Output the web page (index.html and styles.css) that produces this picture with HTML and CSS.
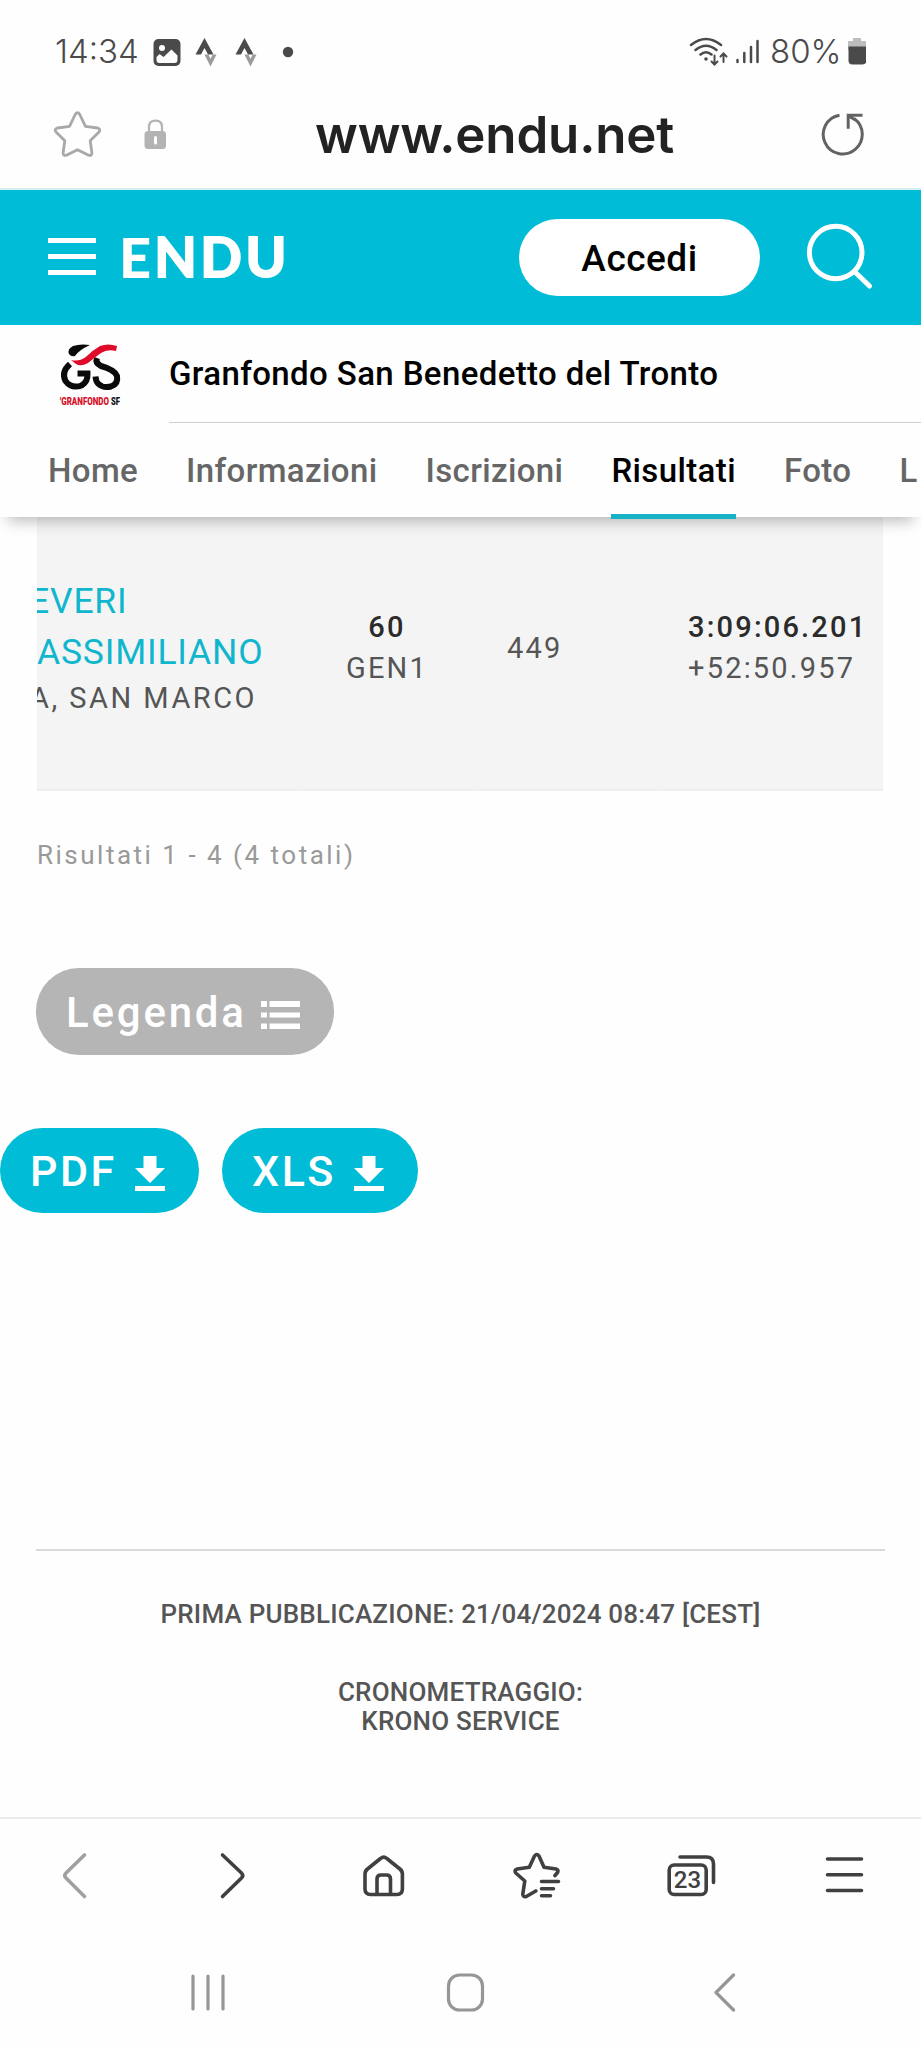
FILE: index.html
```
<!DOCTYPE html>
<html lang="it">

<head>
    <meta charset="UTF-8">
    <meta name="viewport" content="width=device-width, initial-scale=1.0">
    <title>Granfondo San Benedetto del Tronto - Risultati</title>
    <link rel="stylesheet" href="styles.css">
</head>

<body>
    <div class="status-bar">
        <span class="time">14:34</span>
        <svg class="status-icons" width="142" height="32" viewBox="152 37 142 32">
            <rect x="153.5" y="39" width="27" height="27" rx="5" fill="#4a4a4a"/>
            <circle cx="162" cy="48" r="3" fill="#fefefe"/>
            <path d="M156.500 57l3-3 4 3 8-7.500 6 6v4.500q0 3-3 3h-15q-3 0-3-3z" fill="#fefefe"/>
            <g id="strava">
                <path d="M204.500 38l9 16.500h-5.500l-3.500-6.500-3.500 6.500h-5.500z" fill="#4a4a4a"/>
                <path d="M204.500 54.500h4l2 4.500 2-4.500h4l-6 12z" fill="#9b9b9b"/>
            </g>
            <use href="#strava" x="40"/>
            <circle cx="288" cy="52" r="5.200" fill="#4a4a4a"/>
        </svg>
        <svg class="signal" width="72" height="30" viewBox="688 36 72 30" fill="none" stroke="#4a4a4a" stroke-width="2.500" stroke-linecap="round">
            <path d="M691 45q15-12 30 0M695.500 50q10.500-8.500 21 0M700.500 54.500q5.500-4.500 11 0"/>
            <circle cx="706" cy="59" r="1.800" fill="#4a4a4a" stroke="none"/>
            <path d="M714.500 55.500v8M711.500 61.500l3 3 3-3M723.500 62v-8M720.500 56.500l3-3 3 3" stroke-width="2"/>
            <path d="M737.500 60v2M744.300 53v9M751 47v15M757.500 41v21"/>
        </svg>
        <span class="percent">80%</span>
        <svg width="18" height="28" viewBox="848 37 18 28">
            <path d="M853 38h8v3h5v9h-18v-9h5z" fill="#bdbdbd"/>
            <path d="M848.500 46.500h18v14q0 4-4 4h-10q-4 0-4-4z" fill="#4a4a4a"/>
        </svg>
    </div>

    <div class="url-bar">
        <svg class="star" width="48" height="48" viewBox="53 109 48 48" fill="none" stroke="#a8a8a8" stroke-width="2.800" stroke-linejoin="round">
            <path d="M75.200 113.500q2.300-3.500 4.600 0l5.700 11.800 12.200 1.700q3.300 1 1.300 4l-8.800 8.700 1.700 12q0 3.500-3.300 2.500l-11.100-5.400-11.100 5.400q-3.300 1-3.300-2.500l1.700-12-8.800-8.700q-2-3 1.300-4l12.200-1.700z"/>
        </svg>
        <svg class="lock" width="23" height="31" viewBox="144 118 23 31">
            <path d="M149 131v-5q0-6.300 6.500-6.300t6.500 6.300v5" fill="none" stroke="#b3b3b3" stroke-width="2.200"/>
            <rect x="144.500" y="130" width="21.500" height="18" rx="3.500" fill="#b3b3b3"/>
            <path d="M155.500 136.500v5.500" stroke="#fefefe" stroke-width="3" stroke-linecap="round"/>
        </svg>
        <span class="address">www.endu.net</span>
        <svg class="reload" width="44" height="44" viewBox="821 111 44 44" fill="none" stroke="#636363" stroke-width="3">
            <path d="M840.500 114.200a19.500 19.500 0 1 0 14.500 3.300"/>
            <path d="M863.500 114.200h-14.300v13.500M849.500 115l7 4"/>
        </svg>
    </div>

    <header>
        <div class="hamburger"><i></i><i></i><i></i></div>
        <div class="brand"><b>E</b>NDU</div>
        <button class="btn-login">Accedi</button>
        <svg width="68" height="68" viewBox="806 222 68 68" fill="none" stroke="#fff" stroke-width="5" stroke-linecap="round">
            <circle cx="836.700" cy="252.500" r="26.300"/>
            <path d="M856.500 272.500l14 13.500"/>
        </svg>
    </header>

    <div class="event">
        <svg class="event-logo" width="64" height="64" viewBox="58 343 64 64">
            <path d="M70 365q-9 8-4.500 17 6 8 16 4.500 6.500-3.500 6-12h-10" fill="none" stroke="#0a0a0a" stroke-width="6"/>
            <path d="M97 359q-2 5 4 8 14 4 16 10 1.500 8-6 10.500-8 2-13-3-2-2-2.500-7" fill="none" stroke="#0a0a0a" stroke-width="6"/>
            <path d="M90 346q-10-1.500-17 1-6 3-4 8 2 3 6 2 4-6 15-11z" fill="#0a0a0a"/>
            <path d="M71 361q9 2 16-4 6-6 13-10 8-3 17 0l-1 5q-9-2-15 2-7 5-13 10-7 4-12 1z" fill="#e00b28"/>
            <text x="60" y="405.500" textLength="49" lengthAdjust="spacingAndGlyphs" class="logo-text">'GRANFONDO</text>
            <text x="111" y="405.500" textLength="9" lengthAdjust="spacingAndGlyphs" class="logo-text dark">SF</text>
        </svg>
        <h1>Granfondo San Benedetto del Tronto</h1>
    </div>

    <nav>
        <a href="#">Home</a>
        <a href="#">Informazioni</a>
        <a href="#">Iscrizioni</a>
        <a href="#" class="active">Risultati</a>
        <a href="#">Foto</a>
        <a href="#">L</a>
    </nav>

    <main>
        <div class="result-row">
            <div class="cell athlete">
                <div class="name"><span class="cut">EVERI</span></div>
                <div class="name">ASSIMILIANO</div>
                <div class="team">A, SAN MARCO</div>
            </div>
            <div class="cell category">
                <strong>60</strong>
                <span>GEN1</span>
            </div>
            <div class="cell bib"><span>449</span></div>
            <div class="cell result">
                <strong>3:09:06.201</strong>
                <span>+52:50.957</span>
            </div>
        </div>

        <p class="count">Risultati 1 - 4 (4 totali)</p>

        <button class="btn btn-legend">Legenda
            <svg width="39" height="28" viewBox="0 0 39 28" fill="#fff">
                <path d="M0 0h6v6H0zM8.500 0H39v6H8.500zM0 11.500h6v5H0zM8.500 11.500H39v5H8.500zM0 22.500h6v6H0zM8.500 22.500H39v6H8.500z"/>
            </svg>
        </button>

        <div class="downloads">
            <button class="btn btn-pdf">PDF
                <svg width="30" height="35" viewBox="0 0 30 35" fill="#fff">
                    <path d="M8.500 0h13v12H30L15 27 0 12h8.500zM0 30h30v5H0z"/>
                </svg>
            </button>
            <button class="btn btn-xls">XLS
                <svg width="30" height="35" viewBox="0 0 30 35" fill="#fff">
                    <path d="M8.500 0h13v12H30L15 27 0 12h8.500zM0 30h30v5H0z"/>
                </svg>
            </button>
        </div>

        <div class="info">
            <p class="published">PRIMA PUBBLICAZIONE: 21/04/2024 08:47 [CEST]</p>
            <p class="timing">CRONOMETRAGGIO:<br><span>KRONO SERVICE</span></p>
        </div>
    </main>

    <div class="toolbar">
        <svg width="48" height="48" viewBox="50 1852 48 48"><path d="M84.500 1855l-18.500 18q-2.500 2.500 0 5l18.500 18.500"/></svg>
        <svg width="48" height="48" viewBox="209 1852 48 48"><path d="M222.500 1855l19 18q2.500 2.500 0 5l-19 18.500"/></svg>
        <svg width="48" height="48" viewBox="360 1852 48 48">
            <path d="M365 1874q0-3 2.500-5l13-10.500q3.200-2.800 6.400 0l13 10.500q2.500 2 2.500 5v15q0 5.500-5.500 5.500h-26.400q-5.500 0-5.500-5.500z"/>
            <path d="M377 1894v-15q0-4 4-4h5.500q4 0 4 4v15"/>
        </svg>
        <svg width="48" height="48" viewBox="513 1852 48 48">
            <path d="M555 1875.500l2.500-3q1.500-2.500-1.500-3.500l-12-1.800-5-11.200q-2.200-3-4.500 0l-5.200 11.200-12 1.800q-3.500 1-1.500 4l9 8-2 13q0 3.500 3.500 2.500l9.500-5.500"/>
            <path d="M541.500 1881.500h17M541.500 1888.700h12M541.500 1895.700h9"/>
        </svg>
        <svg width="50" height="48" viewBox="667 1852 50 48">
            <rect x="669.200" y="1865" width="37" height="29.500" rx="5"/>
            <path d="M680 1857h26.500q7 0 7 7v18.500"/>
            <text x="687.500" y="1888" text-anchor="middle" class="tab-count">23</text>
        </svg>
        <svg width="48" height="48" viewBox="820 1852 48 48"><path d="M827.500 1859h34M827.500 1874.700h34M827.500 1890.500h34"/></svg>
    </div>

    <div class="system-nav">
        <svg width="40" height="40" viewBox="188 1972 40 40"><path d="M193 1976v33M208 1976v33M223 1976v33"/></svg>
        <svg width="40" height="40" viewBox="446 1972 40 40"><rect x="448.500" y="1975" width="34" height="35" rx="11"/></svg>
        <svg width="40" height="40" viewBox="704 1972 40 40"><path d="M733.500 1975l-17.500 17.500 17.500 17.500"/></svg>
    </div>
</body>

</html>
```
FILE: styles.css
```
* {
    box-sizing: border-box;
}

body {
    background-color: #FEFEFE;
    color: #555;
    font-family: Roboto, Arial, sans-serif;
    margin: 0;
    height: 2048px;
    display: flex;
    flex-direction: column;
    overflow: hidden;
}

svg {
    display: block;
    flex: none;
}

button {
    border: none;
    font-family: inherit;
    cursor: pointer;
}

.status-bar {
    display: flex;
    align-items: center;
    height: 102px;
    padding: 0 55px 0 55px;
    font-family: Inter, sans-serif;
    font-size: 33px;
    font-weight: 350;
    color: #4A4A4A;
}

.time {
    width: 97px;
}

.status-icons {
    margin-top: 4px;
}

.signal {
    margin-left: auto;
}

.percent {
    width: 88px;
    padding-left: 10px;
    white-space: nowrap;
}

.url-bar {
    display: flex;
    align-items: center;
    height: 88px;
    padding: 0 57px 22px 53px;
    border-bottom: 2px solid #D5EFF2;
}

.lock {
    margin-left: 43px;
}

.address {
    margin-left: 148px;
    font-family: Inter, sans-serif;
    font-size: 51px;
    font-weight: 600;
    letter-spacing: -0.15px;
    color: #222;
}

.reload {
    margin-left: auto;
}

header {
    display: flex;
    align-items: center;
    height: 135px;
    padding: 0 48px 3px 48px;
    background-color: #00BCD6;
}

.hamburger {
    display: flex;
    flex-direction: column;
    gap: 11px;
    width: 48px;
}

.hamburger i {
    height: 5px;
    background-color: #FFF;
}

.brand {
    margin-left: 23px;
    font-family: Lato, sans-serif;
    font-size: 56px;
    font-weight: 800;
    letter-spacing: 2.6px;
    color: #FFF;
}

.brand b {
    font-weight: 900;
}

.btn-login {
    width: 241px;
    height: 77px;
    margin-top: 3px;
    margin-left: auto;
    margin-right: 45px;
    padding: 2px 0 0;
    border-radius: 39px;
    background-color: #FFF;
    color: #000;
    font-size: 37px;
    font-weight: 500;
    letter-spacing: 0.5px;
}

.event {
    display: flex;
    align-items: center;
    height: 98px;
    padding-left: 58px;
}

.event-logo {
    overflow: visible;
}

.logo-text {
    font-family: Roboto, sans-serif;
    font-size: 11px;
    font-weight: 900;
    fill: #D8102A;
}

.logo-text.dark {
    fill: #111;
}

.event h1 {
    flex: 1;
    margin: 0 0 0 47px;
    border-bottom: 1px solid #CFCFCF;
    line-height: 97px;
    font-size: 33px;
    font-weight: 500;
    letter-spacing: 0.38px;
    color: #000;
    white-space: nowrap;
}

nav {
    position: relative;
    display: flex;
    gap: 48px;
    height: 94px;
    padding-left: 48px;
    background-color: #FEFEFE;
    box-shadow: 0 12px 14px -8px rgba(0, 0, 0, 0.27);
}

nav a {
    height: 96px;
    line-height: 96px;
    color: #666;
    text-decoration: none;
    font-size: 33px;
    font-weight: 500;
    letter-spacing: 0.38px;
}

nav a.active {
    color: #000;
    border-bottom: 5px solid #18B2C6;
}

.result-row {
    display: flex;
    width: 846px;
    height: 274px;
    margin-left: 37px;
    overflow: hidden;
    background-color: #F4F4F4;
}

.cell {
    display: flex;
    flex-direction: column;
    justify-content: center;
    padding-bottom: 10px;
    border-bottom: 2px solid #EEE;
    border-right: 3px solid #F4F4F4;
    line-height: 41px;
    font-size: 29px;
    font-weight: 450;
    letter-spacing: 2.2px;
    white-space: nowrap;
}

.cell strong {
    font-weight: 500;
    color: #2B2B2B;
}

.athlete {
    width: 263px;
    padding-bottom: 12px;
}

.name {
    line-height: 51px;
    font-size: 35.5px;
    letter-spacing: 0.8px;
    color: #10B6CD;
}

.cut {
    margin-left: -8px;
}

.team {
    margin-left: -7px;
    letter-spacing: 2.5px;
}

.category {
    width: 177px;
    align-items: center;
}

.bib {
    width: 184px;
    padding-left: 30px;
}

.result {
    flex: 1;
    padding-left: 27px;
    border-right: none;
}

.count {
    margin: 49px 0 0 37px;
    line-height: 30px;
    font-size: 26px;
    letter-spacing: 2.5px;
    color: #999;
}

.btn {
    display: flex;
    align-items: center;
    height: 85px;
    padding: 1px 34px 0 30px;
    border-radius: 43px;
    background-color: #00BCD6;
    color: #FFF;
    font-size: 43px;
    font-weight: 550;
    letter-spacing: 2.5px;
}

.btn svg {
    margin-left: auto;
    margin-top: 5px;
}

.btn-legend {
    width: 298px;
    height: 87px;
    margin: 98px 0 0 36px;
    background-color: #B5B5B5;
    font-size: 42px;
    letter-spacing: 2.8px;
}

.downloads {
    display: flex;
    gap: 23px;
    margin-top: 73px;
}

.btn-pdf {
    width: 199px;
}

.btn-xls {
    width: 196px;
}

.info {
    margin: 336px 36px 0;
    padding-top: 49px;
    border-top: 2px solid #DADADA;
    text-align: center;
    font-size: 26px;
    font-weight: 500;
    line-height: 29.5px;
    letter-spacing: 0.2px;
    color: #555;
}

.info p {
    margin: 0 0 48px;
}

.toolbar {
    display: grid;
    grid-template-columns: 159px 151px 153px 154px 153px 48px;
    height: 117px;
    margin-top: auto;
    padding: 33px 53px 0 50px;
    border-top: 2px solid #ECECEC;
}

.toolbar svg,
.system-nav svg {
    fill: none;
    stroke: #404040;
    stroke-width: 3.6px;
    stroke-linecap: round;
    stroke-linejoin: round;
}

.toolbar svg:first-child {
    stroke: #A0A0A0;
}

.toolbar .tab-count {
    font-family: Roboto, sans-serif;
    font-size: 24px;
    font-weight: 500;
    fill: #404040;
    stroke: none;
}

.system-nav {
    display: flex;
    justify-content: space-between;
    height: 114px;
    padding: 38px 177px 0 188px;
}

.system-nav svg {
    stroke: #969696;
    stroke-width: 3.2px;
}
```
